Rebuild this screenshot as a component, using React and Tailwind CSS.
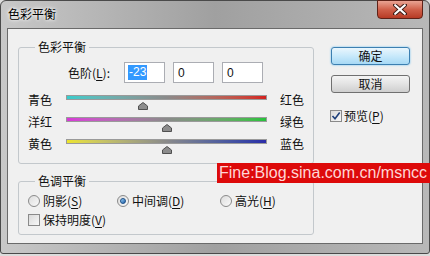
import React from "react";

const CJK = "font-['Noto_Sans_CJK_SC','Noto_Sans',sans-serif]";

function Knob({ value }) {
  const left = ((value + 100) / 200) * 201 - 5;
  return (
    <svg
      className="absolute top-[7px]"
      style={{ left: `${left}px` }}
      width="10"
      height="8"
      viewBox="0 0 10 8"
    >
      <path d="M5 0.5 L9.5 4 L9.5 7.5 L0.5 7.5 L0.5 4 Z" fill="#8c8c8c" stroke="#505050" strokeWidth="1" />
    </svg>
  );
}

function SliderRow({ left, right, grad, value }) {
  return (
    <div className="flex h-[22px] ml-[9px] items-start">
      <div className="w-[38px] text-[12px] leading-[14px] text-[#111]">{left}</div>
      <div className="relative w-[201px] mt-[2px]">
        <div className={`h-[5px] border border-[#9a9a9a] ${grad}`} />
        <Knob value={value} />
      </div>
      <div className="ml-[13px] text-[12px] leading-[14px] text-[#111]">{right}</div>
    </div>
  );
}

function Radio({ checked }) {
  return (
    <span className="relative w-[12px] h-[12px] rounded-full border border-[#8a8a8a] bg-linear-to-br from-[#dcdcdc] to-[#fafafa] flex items-center justify-center">
      {checked && (
        <span className="w-[6px] h-[6px] rounded-full bg-linear-to-br from-[#9ad0f5] to-[#1c5fa8] border border-[#1c4f88]" />
      )}
    </span>
  );
}

function Check({ checked }) {
  return (
    <span className="w-[12px] h-[12px] border border-[#8a8a8a] bg-linear-to-br from-[#dadada] to-[#f8f8f8] flex items-center justify-center">
      {checked && (
        <svg width="10" height="10" viewBox="0 0 10 10">
          <path d="M1.5 5 L4 7.8 L8.7 1.5" fill="none" stroke="#1e3f7a" strokeWidth="1.6" />
        </svg>
      )}
    </span>
  );
}

function U({ children }) {
  return <span className="underline underline-offset-2">{children}</span>;
}

export default function App() {
  return (
    <div className="w-[430px] h-[256px] bg-[#dcdcdc] overflow-hidden">
      <div className={`relative w-[430px] h-[254px] border border-[#4a4a4a] rounded-t-[6px] rounded-b-[3px] bg-linear-to-r from-[#c8c8c8] via-[#a0a0a0] to-[#b8b8b8] ${CJK}`}>
        {/* title bar */}
        <div className="flex h-[27px] items-start justify-between">
          <div className="pl-[7px] pt-[6px] text-[12px] leading-[14px] text-black [text-shadow:0_0_5px_#fff,0_0_3px_#fff]">
            色彩平衡
          </div>
          <div className="mr-[6px] -mt-px w-[46px] h-[19px] rounded-b-[4px] border border-[#5e2218] bg-linear-to-b from-[#e9a393] via-[#d0604a] to-[#b73a24] flex items-center justify-center">
            <svg width="14" height="11" viewBox="0 0 14 11">
              <path d="M2 1 L12 10 M12 1 L2 10" stroke="#3a1a14" strokeWidth="4" strokeLinecap="round" />
              <path d="M2.2 1.2 L11.8 9.8 M11.8 1.2 L2.2 9.8" stroke="#ffffff" strokeWidth="2.2" strokeLinecap="round" />
            </svg>
          </div>
        </div>

        {/* client area */}
        <div className="ml-[6px] w-[416px] h-[216px] border border-[#6a6a6a] bg-[#f0f0f0] flex pl-[10px] pt-[10px]">
          <div className="w-[296px] flex flex-col gap-[9px]">
            <fieldset className="border border-[#c3c8cc] rounded-[3px] pb-[4px]">
              <legend className="ml-[16px] px-[3px] text-[12px] leading-[16px] text-[#111]">色彩平衡</legend>
              <div className="flex items-center mt-[7px] ml-[49px] h-[21px]">
                <div className="w-[56px] text-[12px] leading-[21px] text-[#111]">
                  色阶(<U>L</U>):
                </div>
                <div className="flex gap-[8px]">
                  <div className="w-[41px] h-[21px] border border-[#abadb3] bg-white pl-[3px] flex items-center">
                    <span className="bg-[#3399ff] text-white text-[12px] leading-[15px] px-[1px] font-['Liberation_Sans',sans-serif]">-23</span>
                  </div>
                  <div className="w-[41px] h-[21px] border border-[#abadb3] bg-white pl-[4px] flex items-center text-[12px] font-['Liberation_Sans',sans-serif] text-[#111]">0</div>
                  <div className="w-[41px] h-[21px] border border-[#abadb3] bg-white pl-[4px] flex items-center text-[12px] font-['Liberation_Sans',sans-serif] text-[#111]">0</div>
                </div>
              </div>
              <div className="mt-[10px]">
                <SliderRow left="青色" right="红色" value={-23} grad="bg-linear-to-r from-[#35cccc] via-[#8a8a8a] to-[#d41e1e]" />
                <SliderRow left="洋红" right="绿色" value={0} grad="bg-linear-to-r from-[#d838d8] via-[#8a8a8a] to-[#22c23a]" />
                <SliderRow left="黄色" right="蓝色" value={0} grad="bg-linear-to-r from-[#ece42a] via-[#8a8a8a] to-[#2c2ca8]" />
              </div>
            </fieldset>

            <fieldset className="border border-[#c3c8cc] rounded-[3px] pb-[7px]">
              <legend className="ml-[16px] px-[3px] text-[12px] leading-[16px] text-[#111]">色调平衡</legend>
              <div className="flex mt-[5px] ml-[9px] h-[14px] items-center text-[12px] leading-[14px] text-[#111]">
                <div className="w-[89px] flex items-center gap-[3px]">
                  <Radio />
                  <span>阴影(<U>S</U>)</span>
                </div>
                <div className="w-[103px] flex items-center gap-[3px]">
                  <Radio checked />
                  <span>中间调(<U>D</U>)</span>
                </div>
                <div className="flex items-center gap-[3px]">
                  <Radio />
                  <span>高光(<U>H</U>)</span>
                </div>
              </div>
              <div className="flex mt-[5px] ml-[9px] h-[14px] items-center gap-[3px] text-[12px] leading-[14px] text-[#111]">
                <Check />
                <span>保持明度(<U>V</U>)</span>
              </div>
            </fieldset>
          </div>

          <div className="ml-[17px] w-[79px] pt-[8px] flex flex-col">
            <div className="h-[18px] rounded-[3px] border border-[#3c7fb1] bg-linear-to-b from-[#eaf6fd] via-[#c8e9fb] to-[#a7d9f5] shadow-[0_0_2px_#5ab8ef] flex items-center justify-center text-[12px] leading-[14px] text-[#111]">
              确定
            </div>
            <div className="mt-[10px] h-[18px] rounded-[3px] border border-[#707070] bg-linear-to-b from-[#f4f4f4] via-[#e3e3e3] to-[#cfcfcf] flex items-center justify-center text-[12px] leading-[14px] text-[#111]">
              取消
            </div>
            <div className="mt-[16px] -ml-px flex items-center gap-[2px] h-[14px] text-[12px] leading-[14px] text-[#111]">
              <Check checked />
              <span>预览(<U>P</U>)</span>
            </div>
          </div>
        </div>

        {/* watermark banner */}
        <div className="absolute left-[216px] top-[162px] w-[214px] h-[20px] bg-[#dd0a0a] pl-[2px] text-[16px] leading-[20px] text-[#ffd6d6] font-['Liberation_Sans',sans-serif] whitespace-nowrap">
          Fine:Blog.sina.com.cn/msncc
        </div>
      </div>
    </div>
  );
}
